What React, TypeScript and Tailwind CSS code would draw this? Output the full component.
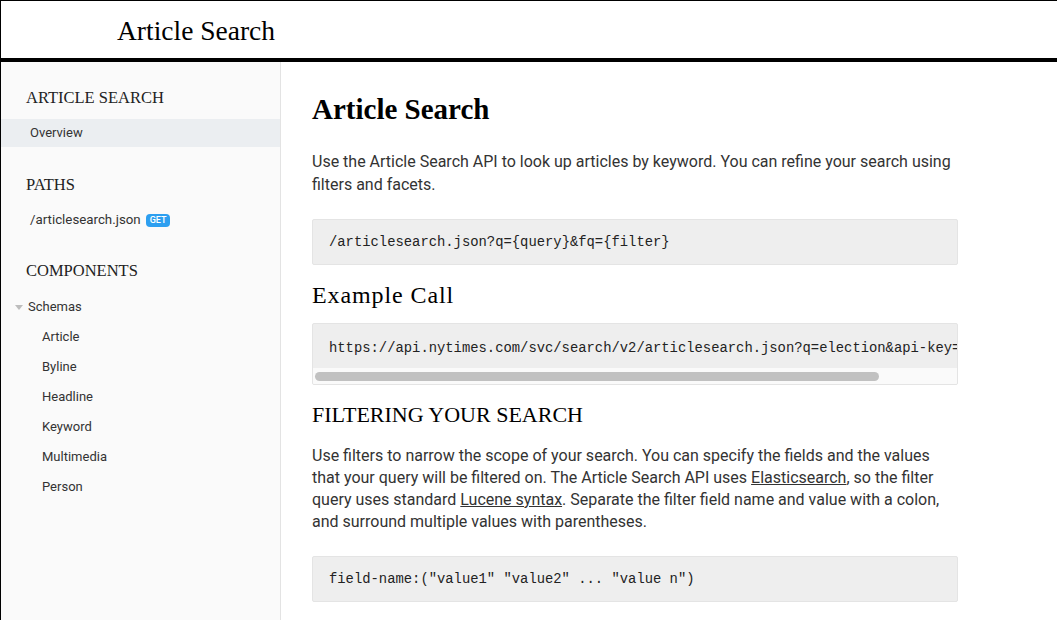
import React from 'react';

const serif = { fontFamily: '"Liberation Serif", "DejaVu Serif", serif' };

function SideHeading({ children }: { children: React.ReactNode }) {
  return (
    <div className="h-[20px] pl-[25px] text-[16.5px] leading-[20px] text-[#222] uppercase" style={serif}>
      {children}
    </div>
  );
}

function CodeBlock({ children }: { children: React.ReactNode }) {
  return (
    <div className="rounded-[2px] border border-[#e4e4e4] bg-[#eeeeee] px-[16px] py-[13px]">
      <code className="block whitespace-pre font-['Liberation_Mono',monospace] text-[13.85px] leading-[18px] text-[#222]">
        {children}
      </code>
    </div>
  );
}

export default function App() {
  const schemas = ['Article', 'Byline', 'Headline', 'Keyword', 'Multimedia', 'Person'];

  return (
    <div className="h-[620px] w-[1057px] overflow-hidden border-t border-l border-black bg-white font-['Roboto',sans-serif]">
      {/* Header */}
      <header className="flex h-[61px] items-center border-b-4 border-black pl-[116px]">
        <h1 className="pt-[2px] text-[27.5px] leading-[30px] text-black" style={serif}>
          Article Search
        </h1>
      </header>

      <div className="flex h-[558px]">
        {/* Sidebar */}
        <aside className="w-[280px] shrink-0 border-r border-[#e3e3e3] bg-[#fafafa] pt-[26px]">
          <SideHeading>Article Search</SideHeading>
          <div className="mt-[11px] flex h-[28px] items-center bg-[#ebeef1] pl-[29px] text-[13px] text-[#333]">
            Overview
          </div>

          <div className="mt-[28px]">
            <SideHeading>Paths</SideHeading>
          </div>
          <div className="mt-[11px] flex h-[28px] items-center gap-[5px] pl-[29px] text-[13.3px] text-[#333]">
            <span>/articlesearch.json</span>
            <span className="rounded-[4px] bg-[#2d9ff0] px-[4px] text-[9px] font-medium leading-[13px] text-white">
              GET
            </span>
          </div>

          <div className="mt-[27px]">
            <SideHeading>Components</SideHeading>
          </div>
          <div className="mt-[11px] flex h-[30px] items-center pl-[14px] text-[13px] text-[#333]">
            <svg width="8" height="5" viewBox="0 0 8 5" className="mr-[5px]">
              <path d="M0 0 L8 0 L4 5 Z" fill="#bdbdbd" />
            </svg>
            Schemas
          </div>
          {schemas.map((s) => (
            <div key={s} className="flex h-[30px] items-center pl-[41px] text-[13px] text-[#333]">
              {s}
            </div>
          ))}
        </aside>

        {/* Main */}
        <main className="w-[646px] pl-[31px] pt-[29px] box-content">
          <h2 className="text-[29px] font-bold leading-[36px] text-black" style={serif}>
            Article Search
          </h2>
          <p className="mt-[23px] text-[16px] leading-[23px] text-[#333]">
            Use the Article Search API to look up articles by keyword. You can refine your search using filters and
            facets.
          </p>
          <div className="mt-[23px]">
            <CodeBlock>/articlesearch.json?q={'{query}'}&amp;fq={'{filter}'}</CodeBlock>
          </div>

          <h3 className="mt-[16px] text-[24px] leading-[28px] tracking-[0.9px] text-black" style={serif}>
            Example Call
          </h3>
          <div className="mt-[14px] overflow-hidden rounded-[2px] border border-[#e4e4e4] bg-[#eeeeee]">
            <div className="px-[16px] pt-[15px] pb-[11px]">
              <code className="block whitespace-pre font-['Liberation_Mono',monospace] text-[13.85px] leading-[18px] text-[#222]">
                https://api.nytimes.com/svc/search/v2/articlesearch.json?q=election&amp;api-key=yourkey
              </code>
            </div>
            <div className="flex h-[16px] items-center bg-[#fafafa] px-[2px]">
              <div className="h-[9px] w-[564px] rounded-full bg-[#c1c1c1]" />
            </div>
          </div>

          <h3 className="mt-[16px] text-[22px] leading-[28px] text-black uppercase" style={serif}>
            Filtering your search
          </h3>
          <p className="mt-[16px] text-[16px] leading-[22px] text-[#333]">
            Use filters to narrow the scope of your search. You can specify the fields and the values that your query
            will be filtered on. The Article Search API uses <a className="underline">Elasticsearch</a>, so the filter
            query uses standard <a className="underline">Lucene syntax</a>. Separate the filter field name and value
            with a colon, and surround multiple values with parentheses.
          </p>
          <div className="mt-[23px]">
            <CodeBlock>field-name:("value1" "value2" ... "value n")</CodeBlock>
          </div>
        </main>
      </div>
    </div>
  );
}
